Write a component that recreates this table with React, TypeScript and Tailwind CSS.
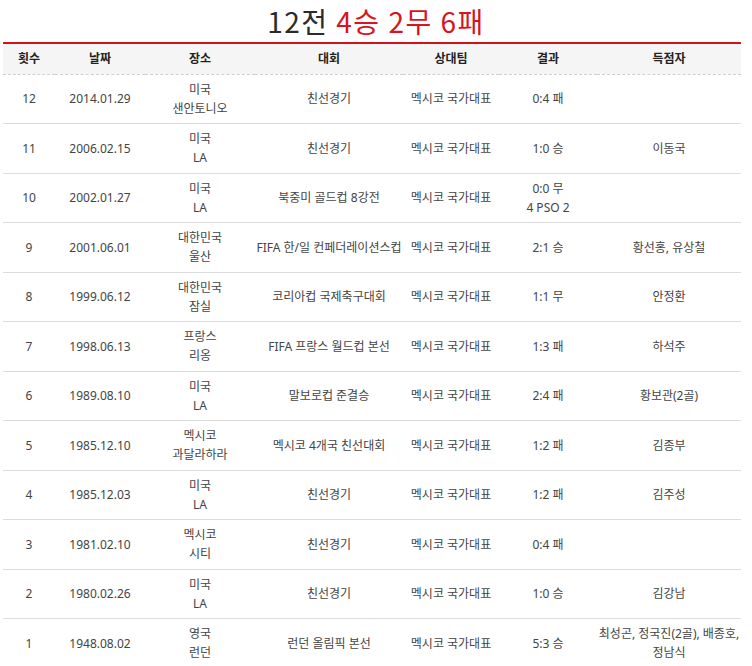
const rows = [
  { no: 12, date: "2014.01.29", place: ["미국", "샌안토니오"], comp: "친선경기", opp: "멕시코 국가대표", result: ["0:4 패"], scorer: [] as string[] },
  { no: 11, date: "2006.02.15", place: ["미국", "LA"], comp: "친선경기", opp: "멕시코 국가대표", result: ["1:0 승"], scorer: ["이동국"] },
  { no: 10, date: "2002.01.27", place: ["미국", "LA"], comp: "북중미 골드컵 8강전", opp: "멕시코 국가대표", result: ["0:0 무", "4 PSO 2"], scorer: [] },
  { no: 9, date: "2001.06.01", place: ["대한민국", "울산"], comp: "FIFA 한/일 컨페더레이션스컵", opp: "멕시코 국가대표", result: ["2:1 승"], scorer: ["황선홍, 유상철"] },
  { no: 8, date: "1999.06.12", place: ["대한민국", "잠실"], comp: "코리아컵 국제축구대회", opp: "멕시코 국가대표", result: ["1:1 무"], scorer: ["안정환"] },
  { no: 7, date: "1998.06.13", place: ["프랑스", "리옹"], comp: "FIFA 프랑스 월드컵 본선", opp: "멕시코 국가대표", result: ["1:3 패"], scorer: ["하석주"] },
  { no: 6, date: "1989.08.10", place: ["미국", "LA"], comp: "말보로컵 준결승", opp: "멕시코 국가대표", result: ["2:4 패"], scorer: ["황보관(2골)"] },
  { no: 5, date: "1985.12.10", place: ["멕시코", "과달라하라"], comp: "멕시코 4개국 친선대회", opp: "멕시코 국가대표", result: ["1:2 패"], scorer: ["김종부"] },
  { no: 4, date: "1985.12.03", place: ["미국", "LA"], comp: "친선경기", opp: "멕시코 국가대표", result: ["1:2 패"], scorer: ["김주성"] },
  { no: 3, date: "1981.02.10", place: ["멕시코", "시티"], comp: "친선경기", opp: "멕시코 국가대표", result: ["0:4 패"], scorer: [] },
  { no: 2, date: "1980.02.26", place: ["미국", "LA"], comp: "친선경기", opp: "멕시코 국가대표", result: ["1:0 승"], scorer: ["김강남"] },
  { no: 1, date: "1948.08.02", place: ["영국", "런던"], comp: "런던 올림픽 본선", opp: "멕시코 국가대표", result: ["5:3 승"], scorer: ["최성곤, 정국진(2골), 배종호,", "정남식"] },
];

const headers = ["횟수", "날짜", "장소", "대회", "상대팀", "결과", "득점자"];
const widths = ["w-[52px]", "w-[90px]", "w-[110px]", "w-[148px]", "w-[96px]", "w-[98px]", "w-[144px]"];

function Lines({ items }: { items: string[] }) {
  return (
    <>
      {items.map((t, i) => (
        <div key={i}>{t}</div>
      ))}
    </>
  );
}

export default function App() {
  return (
    <div className="w-[752px] bg-white text-[#444] font-['Noto_Sans','Noto_Sans_CJK_KR',sans-serif]">
      <h1 className="h-[42px] text-center text-[28px] leading-[42px] tracking-[1.5px] text-[#2b2b2b] font-normal font-['Noto_Sans_CJK_KR',sans-serif]">
        12전 <span className="text-[#d7141f]">4승 2무 6패</span>
      </h1>
      <table className="mx-[3px] w-[738px] table-fixed border-collapse text-[12px] leading-[19px]">
        <colgroup>
          {widths.map((w, i) => (
            <col key={i} className={w} />
          ))}
        </colgroup>
        <thead>
          <tr className="h-[31px] border-t-2 border-[#d0121b] border-b border-b-[#cfcfcf] border-dashed bg-[#f5f5f5]">
            {headers.map((h) => (
              <th key={h} className="border-t-2 border-solid border-[#d0121b] text-center align-middle font-bold text-[#222] text-[12px]">
                {h}
              </th>
            ))}
          </tr>
        </thead>
        <tbody>
          {rows.map((r) => (
            <tr key={r.no} className="h-[49.5px] border-b border-[#dcdcdc] text-center align-middle">
              <td>{r.no}</td>
              <td>{r.date}</td>
              <td><Lines items={r.place} /></td>
              <td className="whitespace-nowrap">{r.comp}</td>
              <td>{r.opp}</td>
              <td><Lines items={r.result} /></td>
              <td><Lines items={r.scorer} /></td>
            </tr>
          ))}
        </tbody>
      </table>
    </div>
  );
}
